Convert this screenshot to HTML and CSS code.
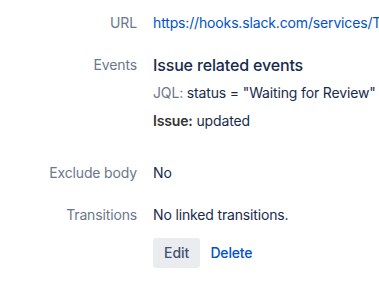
FILE: index.html
```html
<!DOCTYPE html>
<html lang="en">
<head>
<meta charset="UTF-8">
<title>Webhook details</title>
<link rel="stylesheet" href="styles.css">
</head>
<body>

<div class="details">
    <div class="row">
        <div class="label">URL</div>
        <div class="value nowrap"><a href="#">https://hooks.slack.com/services/T</a></div>
    </div>
    <div class="row events">
        <div class="label">Events</div>
        <div class="value">
            <div class="heading">Issue related events</div>
            <div class="line"><span class="muted">JQL:</span> status = "Waiting for Review"</div>
            <div class="line"><b>Issue:</b> updated</div>
        </div>
    </div>
    <div class="row">
        <div class="label">Exclude body</div>
        <div class="value">No</div>
    </div>
    <div class="row last">
        <div class="label">Transitions</div>
        <div class="value">No linked transitions.</div>
    </div>
    <div class="actions">
        <button class="edit">Edit</button>
        <a href="#" class="delete">Delete</a>
    </div>
</div>

</body>
</html>
```

FILE: styles.css
```css
/* Base */
body {
    margin: 0;
    background: #ffffff;
    font-family: Inter, "Noto Sans", sans-serif;
    font-size: 14px;
    line-height: 20px;
    letter-spacing: -0.15px;
    color: #172b4d;
    overflow: hidden;
}

.details {
    padding-top: 13px;
}

/* Each label / value pair */
.row {
    display: grid;
    grid-template-columns: 137px 1fr;
    column-gap: 16px;
    margin-bottom: 22px;
}

.row.events {
    margin-bottom: 32px;
}

.row.last {
    margin-bottom: 13px;
}

.label {
    text-align: right;
    color: #6b778c;
}

.value {
    min-width: 0;
    white-space: nowrap;
    overflow: hidden;
}

a {
    color: #0052cc;
    text-decoration: none;
}

.heading {
    font-size: 16px;
    font-weight: 500;
    line-height: 20px;
}

.line {
    margin-top: 8px;
}

.muted {
    color: #6b778c;
}

b {
    color: #333333;
    font-weight: 600;
}

/* Buttons */
.actions {
    display: flex;
    align-items: center;
    gap: 10px;
    padding-left: 153px;
}

button.edit {
    height: 30px;
    padding: 0 11px;
    border: none;
    border-radius: 3px;
    background: #ebecf0;
    color: #42526e;
    font: inherit;
    font-weight: 500;
}

.delete {
    font-weight: 500;
}
```
